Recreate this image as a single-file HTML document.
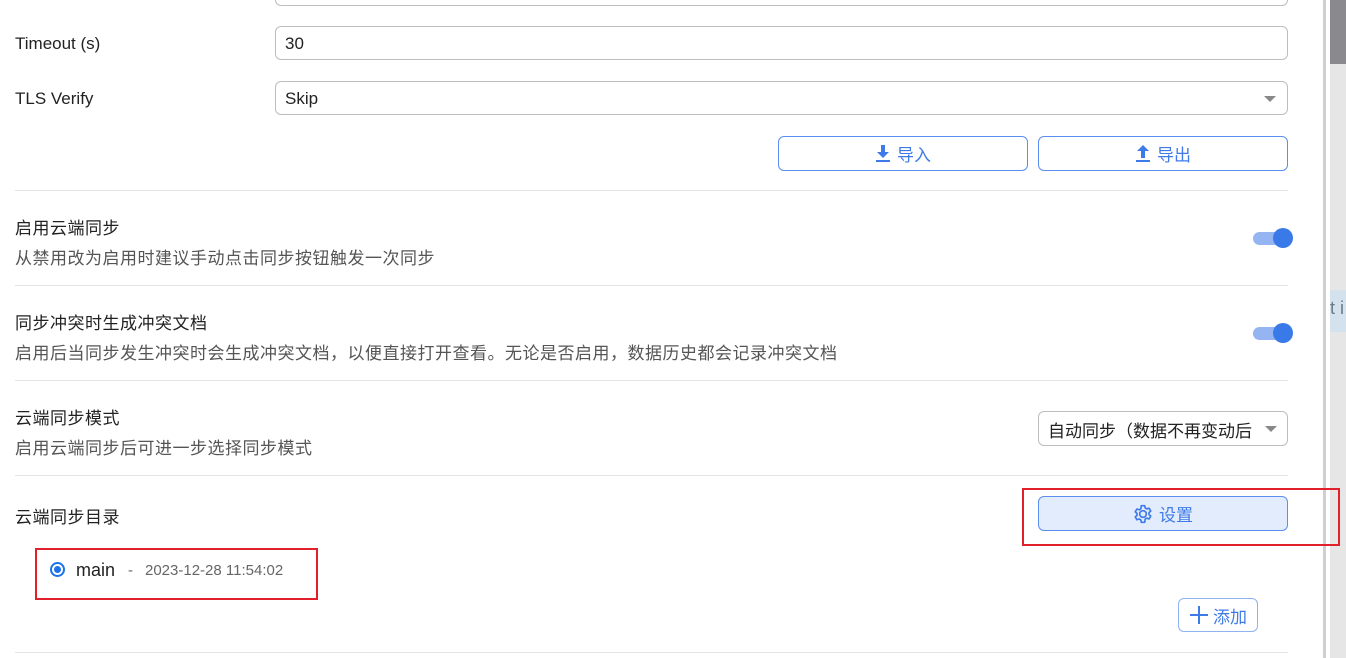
<!DOCTYPE html>
<html><head><meta charset="utf-8"><style>
*{box-sizing:border-box;margin:0;padding:0}
body{width:1346px;height:658px;overflow:hidden;background:#fff;font-family:"Liberation Sans","Noto Sans CJK SC",sans-serif;color:#222;position:relative}
.a{position:absolute}
.inp{position:absolute;left:275px;width:1013px;height:34px;border:1px solid #bdbdbd;border-radius:6px;font-size:17px;padding:6px 9px;color:#222}
.lbl{position:absolute;left:15px;font-size:17px}
.hr{position:absolute;left:15px;width:1273px;height:1px;background:#e3e3e3}
.t{position:absolute;left:15px;font-size:17px;color:#222;letter-spacing:.5px}
.s{position:absolute;left:15px;font-size:17px;color:#555;letter-spacing:.5px}
.btn{position:absolute;height:35px;border:1px solid #5b8ef0;border-radius:6px;color:#3f7be8;font-size:17px;display:flex;align-items:center;justify-content:center;gap:6px}
.tog{position:absolute;left:1253px;width:40px;height:24px}
.tog .tr{position:absolute;left:0;top:6px;width:34px;height:13px;border-radius:7px;background:#94b4f2}
.tog .k{position:absolute;left:20px;top:2px;width:20px;height:20px;border-radius:50%;background:#3a7ae8}
.caret{position:absolute;width:0;height:0;border-left:6px solid transparent;border-right:6px solid transparent;border-top:6px solid #888}
</style></head><body>
<div class="inp" style="top:-28px"></div>
<div class="lbl" style="top:34px">Timeout (s)</div>
<div class="inp" style="top:26px;padding-top:7px">30</div>
<div class="lbl" style="top:89px">TLS Verify</div>
<div class="inp" style="top:81px;padding-top:7px">Skip</div>
<div class="caret" style="left:1264px;top:96px"></div>
<div class="btn" style="left:778px;top:136px;width:250px"><svg width="16" height="18" viewBox="0 0 16 18"><path d="M6 0h4v7h4l-6 6-6-6h4z" fill="#3f7be8"/><rect x="1" y="15" width="14" height="2" fill="#3f7be8"/></svg>导入</div>
<div class="btn" style="left:1038px;top:136px;width:250px"><svg width="16" height="18" viewBox="0 0 16 18"><path d="M6 13h4V6h4L8 0 2 6h4z" fill="#3f7be8"/><rect x="1" y="15" width="14" height="2" fill="#3f7be8"/></svg>导出</div>
<div class="hr" style="top:190px"></div>
<div class="t" style="top:214px">启用云端同步</div>
<div class="s" style="top:244px">从禁用改为启用时建议手动点击同步按钮触发一次同步</div>
<div class="tog" style="top:226px"><div class="tr"></div><div class="k"></div></div>
<div class="hr" style="top:285px"></div>
<div class="t" style="top:309px">同步冲突时生成冲突文档</div>
<div class="s" style="top:339px">启用后当同步发生冲突时会生成冲突文档，以便直接打开查看。无论是否启用，数据历史都会记录冲突文档</div>
<div class="tog" style="top:321px"><div class="tr"></div><div class="k"></div></div>
<div class="hr" style="top:380px"></div>
<div class="t" style="top:404px">云端同步模式</div>
<div class="s" style="top:434px">启用云端同步后可进一步选择同步模式</div>
<div class="a" style="left:1038px;top:411px;width:250px;height:35px;border:1px solid #bdbdbd;border-radius:6px;font-size:17px;padding:5px 9px;white-space:nowrap;overflow:hidden">自动同步（数据不再变动后</div>
<div class="caret" style="left:1265px;top:426px"></div>
<div class="hr" style="top:475px"></div>
<div class="t" style="top:503px">云端同步目录</div>
<div class="btn" style="left:1038px;top:496px;width:250px;background:#e3ecfc"><svg width="20" height="20" viewBox="0 0 24 24"><path d="M12 8a4 4 0 100 8 4 4 0 000-8zM10 2h4l.6 2.8 2 1.1 2.7-.9 2 3.4-2.1 1.9v2.3l2.1 1.9-2 3.4-2.7-.9-2 1.1L14 22h-4l-.6-2.9-2-1.1-2.7.9-2-3.4 2.1-1.9v-2.3L2.7 9.4l2-3.4 2.7.9 2-1.1z" fill="none" stroke="#3f7be8" stroke-width="2" stroke-linejoin="round"/></svg>设置</div>
<div class="a" style="left:35px;top:548px;width:283px;height:52px;border:2px solid #e0202a"></div>
<div class="a" style="left:50px;top:562px;width:15px;height:15px;border-radius:50%;border:2px solid #1a73e8;padding:2px"><div style="width:7px;height:7px;border-radius:50%;background:#1a73e8"></div></div>
<div class="a" style="left:76px;top:560px;font-size:18px;color:#222">main</div>
<div class="a" style="left:128px;top:562px;font-size:15px;color:#666">-</div>
<div class="a" style="left:145px;top:562px;font-size:15px;color:#666">2023-12-28 11:54:02</div>
<div class="btn" style="left:1178px;top:598px;width:80px;height:34px;border-color:#8fb2f0;gap:4px"><svg width="20" height="20" viewBox="0 0 20 20"><path d="M10 1v18M1 10h18" stroke="#3f7be8" stroke-width="2"/></svg>添加</div>
<div class="hr" style="top:652px"></div>
<div class="a" style="left:1323px;top:0;width:3px;height:658px;background:#cfcfcf"></div>
<div class="a" style="left:1330px;top:0;width:16px;height:658px;background:#e6e6e6"></div>
<div class="a" style="left:1330px;top:0;width:16px;height:64px;background:#8a8a8e"></div>
<div class="a" style="left:1330px;top:290px;width:16px;height:42px;background:#d4e2ee;font-size:18px;color:#6a7a88;padding-top:8px;white-space:nowrap;overflow:hidden">t i</div>
<div class="a" style="left:1022px;top:488px;width:318px;height:58px;border:2px solid #e0202a"></div>
</body></html>
